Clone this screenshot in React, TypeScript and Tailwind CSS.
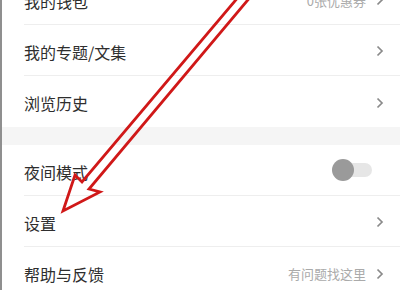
import React from "react";

function Chevron() {
  return (
    <svg width="8" height="12" viewBox="0 0 8 12" className="shrink-0">
      <polyline points="1.5,1.5 6,6 1.5,10.5" fill="none" stroke="#8a8a8a" strokeWidth="1.7" strokeLinejoin="miter" />
    </svg>
  );
}

function Row({ label, right, toggle, last, first }: { label: string; right?: string; toggle?: boolean; last?: boolean; first?: boolean }) {
  return (
    <div className={"pl-[22px] " + (first ? "-mt-[26px]" : "")}>
      <div className={"flex h-[51px] items-center justify-between pr-[16px] " + (last ? "" : "border-b border-[#eeeeee]")}>
        <span className="pt-[3px] text-[16px] leading-none text-[#2e2e2e]">{label}</span>
        {toggle ? (
          <div className="relative mr-[12px] flex h-[22px] w-[40px] items-center">
            <div className="ml-[4px] h-[14px] w-[36px] rounded-full bg-[#e6e6e6]" />
            <div className="absolute left-0 top-0 h-[22px] w-[22px] rounded-full bg-[#9a9a9a]" />
          </div>
        ) : (
          <div className="flex items-center gap-[10px] pt-[2px]">
            {right && <span className="text-[13px] leading-none text-[#aaaaaa]">{right}</span>}
            <Chevron />
          </div>
        )}
      </div>
    </div>
  );
}

export default function App() {
  return (
    <div
      className="relative h-[290px] w-[400px] overflow-hidden border-l-2 border-[#8f8f8f] bg-white"
      style={{ fontFamily: '"Noto Sans CJK SC", "Noto Sans", sans-serif' }}
    >
      <Row first label="我的钱包" right="0张优惠券" />
      <Row label="我的专题/文集" />
      <Row label="浏览历史" last />
      <div className="h-[18px] bg-[#f5f5f5]" />
      <Row label="夜间模式" toggle />
      <Row label="设置" />
      <Row label="帮助与反馈" right="有问题找这里" last />
      <svg className="pointer-events-none absolute left-[-2px] top-0" width="400" height="290" viewBox="0 0 400 290">
        <polygon
          points="240,-5 82,182 75,175 63,211 100,192 89,189 252,-5"
          fill="none"
          stroke="#d01818"
          strokeWidth="2.8"
          strokeLinejoin="miter"
        />
      </svg>
    </div>
  );
}
